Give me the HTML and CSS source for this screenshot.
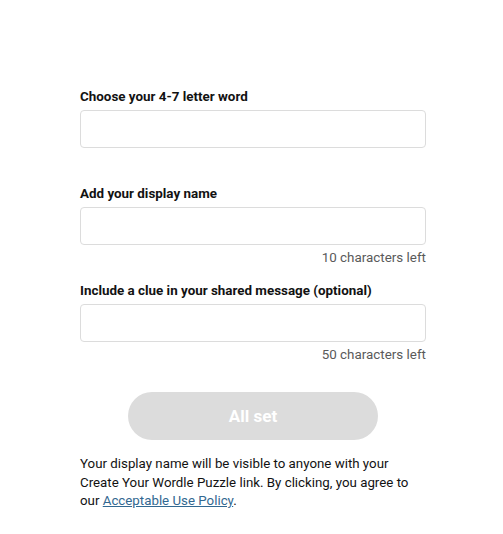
FILE: index.html
```html
<!DOCTYPE html>
<html lang="en">
<head>
<meta charset="utf-8">
<title>Create Your Wordle</title>
<link rel="stylesheet" href="styles.css">
</head>
<body>
<form class="form">
  <div class="field">
    <label class="label" for="word">Choose your 4-7 letter word</label>
    <input class="input" id="word" type="text">
    <div class="counter"></div>
  </div>
  <div class="field">
    <label class="label" for="name">Add your display name</label>
    <input class="input" id="name" type="text">
    <div class="counter">10 characters left</div>
  </div>
  <div class="field">
    <label class="label" for="clue">Include a clue in your shared message (optional)</label>
    <input class="input" id="clue" type="text">
    <div class="counter">50 characters left</div>
  </div>
  <div class="actions">
    <button class="button" type="button" disabled>All set</button>
  </div>
  <p class="note">Your display name will be visible to anyone with your Create Your Wordle Puzzle link. By clicking, you agree to our <a class="link" href="#">Acceptable Use Policy</a>.</p>
</form>
</body>
</html>
```
FILE: styles.css
```css
html, body {
  margin: 0;
  padding: 0;
  background: #ffffff;
}
body {
  font-family: Roboto, "Liberation Sans", sans-serif;
  color: #121212;
}
.form {
  width: 346px;
  margin-left: 80px;
  padding-top: 88px;
  display: flex;
  flex-direction: column;
}
.field {
  display: flex;
  flex-direction: column;
}
.label {
  font-size: 13.4px;
  font-weight: 700;
  line-height: 18px;
  height: 18px;
  margin-bottom: 4px;
}
.input {
  box-sizing: border-box;
  height: 38px;
  width: 100%;
  border: 1px solid #dcdcdc;
  border-radius: 4px;
  background: #fff;
  margin: 0;
  padding: 0 10px;
  font: inherit;
}
.counter {
  text-align: right;
  font-size: 13.4px;
  line-height: 18px;
  height: 18px;
  margin-top: 4px;
  margin-bottom: 15px;
  color: #5a5a5a;
}
.actions {
  display: flex;
  justify-content: center;
  margin-top: 13px;
}
.button {
  width: 250px;
  height: 48px;
  border: none;
  border-radius: 24px;
  background: #dcdcdc;
  color: #ffffff;
  font-family: Roboto, "Liberation Sans", sans-serif;
  font-size: 17px;
  font-weight: 700;
  padding: 0;
}
.note {
  margin: 15px 0 0;
  font-size: 13.3px;
  line-height: 18.5px;
  color: #121212;
  width: 346px;
}
.link {
  color: #326891;
  text-decoration: underline;
  text-underline-offset: 1px;
}
```
